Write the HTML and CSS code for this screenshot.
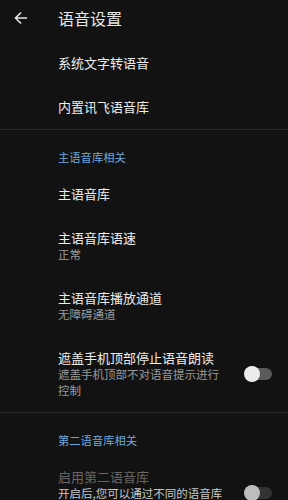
FILE: index.html
```html
<!DOCTYPE html>
<html lang="zh">
    <head>
        <meta charset="UTF-8">
        <meta name="viewport" content="width=device-width, initial-scale=1.0">
        <title>语音设置</title>
        <link rel="stylesheet" href="styles.css">
    </head>
    <body>
        <header class="toolbar">
            <svg class="back" width="16" height="16" viewBox="0 0 16 16">
                <path d="M14 8H2.5M8 2.5L2.5 8L8 13.5" fill="none" stroke="#e6e6e6" stroke-width="1.6"/>
            </svg>
            <h1>语音设置</h1>
        </header>

        <div class="pref"><div class="text"><div class="title">系统文字转语音</div></div></div>
        <div class="pref"><div class="text"><div class="title">内置讯飞语音库</div></div></div>
        <hr>

        <div class="category">主语音库相关</div>
        <div class="pref"><div class="text"><div class="title">主语音库</div></div></div>
        <div class="pref">
            <div class="text">
                <div class="title">主语音库语速</div>
                <div class="summary">正常</div>
            </div>
        </div>
        <div class="pref">
            <div class="text">
                <div class="title">主语音库播放通道</div>
                <div class="summary">无障碍通道</div>
            </div>
        </div>
        <div class="pref">
            <div class="text">
                <div class="title">遮盖手机顶部停止语音朗读</div>
                <div class="summary">遮盖手机顶部不对语音提示进行控制</div>
            </div>
            <span class="switch"><span class="knob"></span></span>
        </div>
        <hr>

        <div class="category">第二语音库相关</div>
        <div class="pref disabled">
            <div class="text">
                <div class="title">启用第二语音库</div>
                <div class="summary">开启后,您可以通过不同的语音库播报不同类型的提示内容</div>
            </div>
            <span class="switch"><span class="knob"></span></span>
        </div>
    </body>
</html>
```

FILE: styles.css
```css
body {
    margin: 0;
    background-color: #121212;
    font-family: "Noto Sans CJK SC", "Noto Sans", sans-serif;
    color: #e6e6e6;
    overflow: hidden;
}

.toolbar {
    display: flex;
    align-items: center;
    height: 36px;
    margin-bottom: 5px;
}

.back {
    margin-left: 13px;
    margin-right: 29px;
}

h1 {
    margin: 0;
    font-size: 16px;
    font-weight: normal;
    line-height: 20px;
    color: #e8e8e8;
}

.pref {
    display: flex;
    align-items: center;
    padding: 14px 16px 14px 58px;
}

.text {
    flex: 1;
}

.title {
    font-size: 13px;
    line-height: 16px;
    color: #ececec;
}

.summary {
    font-size: 11.5px;
    line-height: 16px;
    color: #9a9a9a;
}

.category {
    padding: 19px 16px 7px 58px;
    font-size: 11.3px;
    line-height: 16px;
    color: #6ea7dc;
}

hr {
    margin: 0;
    border: none;
    border-top: 1px solid #2a2a2a;
}

.switch {
    position: relative;
    width: 28px;
    height: 16px;
    margin-left: 18px;
}

.switch::before {
    content: "";
    position: absolute;
    left: 4px;
    right: 0;
    top: 2px;
    height: 12px;
    border-radius: 6px;
    background-color: #5a5a5a;
}

.knob {
    position: absolute;
    left: 0;
    top: 0;
    width: 16px;
    height: 16px;
    border-radius: 50%;
    background-color: #ececec;
}

.disabled .title {
    color: #666;
}

.disabled .summary {
    color: #c8c8c8;
}

.disabled .switch::before {
    background-color: #333;
}

.disabled .knob {
    background-color: #bdbdbd;
}
```
